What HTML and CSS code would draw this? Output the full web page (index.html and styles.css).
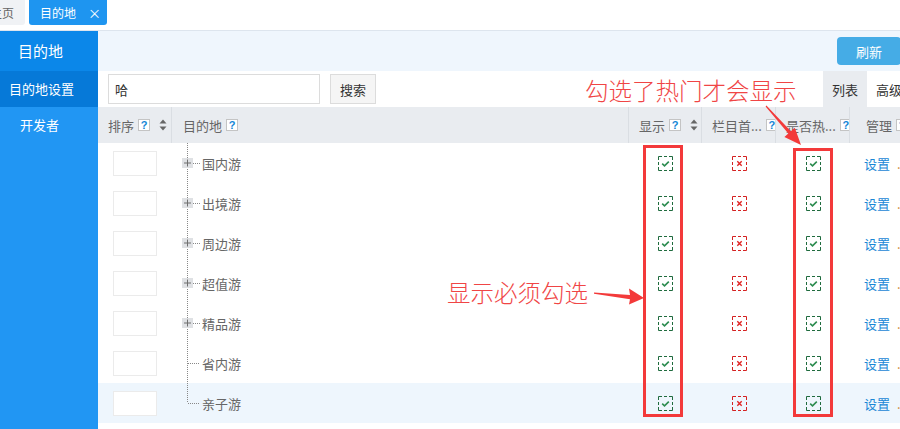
FILE: index.html
```html
<!DOCTYPE html>
<html lang="zh-CN">

<head>
    <meta charset="UTF-8" />
    <meta name="viewport" content="width=device-width, initial-scale=1.0" />
    <link rel="stylesheet" href="styles.css">
    <title>目的地设置</title>
</head>

<body>
    <svg width="0" height="0" class="sprite">
        <symbol id="ico-yes" viewBox="0 0 15 15">
            <path d="M.5 4V.5H4M11 .5h3.5V4M14.5 11v3.5H11M4 14.5H.5V11M6 .5h3M6 14.5h3M.5 6v3M14.5 6v3" fill="none" stroke="#1f6b3e" />
            <path d="M4.2 7.6l2.3 2.2 4.3-4.2" fill="none" stroke="#2d8c50" stroke-width="1.6" />
        </symbol>
        <symbol id="ico-no" viewBox="0 0 15 15">
            <path d="M.5 4V.5H4M11 .5h3.5V4M14.5 11v3.5H11M4 14.5H.5V11M6 .5h3M6 14.5h3M.5 6v3M14.5 6v3" fill="none" stroke="#d42222" />
            <path d="M5.3 5.3l4.4 4.4M9.7 5.3l-4.4 4.4" fill="none" stroke="#e02525" stroke-width="1.4" />
        </symbol>
        <symbol id="ico-sort" viewBox="0 0 8 12">
            <path d="M4 0.5L7.5 4.5H.5z M4 11.5L7.5 7.5H.5z" fill="#666" />
        </symbol>
        <symbol id="ico-plus" viewBox="0 0 11 10">
            <rect width="11" height="10" fill="#dfe1e4" />
            <path d="M2 5h7M5.5 1.5v7" stroke="#6f6f6f" stroke-width="1" />
        </symbol>
    </svg>

    <div class="topbar">
        <div class="tab">主页</div>
        <div class="tab active">目的地<span class="tab-close">×</span></div>
    </div>

    <div class="layout">
        <aside class="sidebar">
            <div class="side-title">目的地</div>
            <div class="side-item current">目的地设置</div>
            <div class="side-item">开发者</div>
        </aside>

        <main class="main">
            <div class="toolbar"><button class="btn-refresh">刷新</button></div>

            <div class="searchbar">
                <input class="search-input" type="text" value="哈">
                <button class="btn-search">搜索</button>
                <div class="view-tabs">
                    <span class="view-tab on">列表</span>
                    <span class="view-tab">高级</span>
                </div>
            </div>

            <table class="grid">
                <colgroup>
                    <col class="c-sort">
                    <col class="c-name">
                    <col class="c-show">
                    <col class="c-home">
                    <col class="c-hot">
                    <col class="c-op">
                </colgroup>
                <thead>
                    <tr>
                        <th>
                            <div class="th-in">排序<i class="q">?</i><svg class="sort"><use href="#ico-sort" /></svg></div>
                        </th>
                        <th class="th-name">
                            <div class="th-in">目的地<i class="q">?</i></div>
                        </th>
                        <th>
                            <div class="th-in">显示<i class="q">?</i><svg class="sort"><use href="#ico-sort" /></svg></div>
                        </th>
                        <th>
                            <div class="th-in">栏目首...<i class="q">?</i></div>
                        </th>
                        <th>
                            <div class="th-in">是否热...<i class="q">?</i></div>
                        </th>
                        <th class="th-op">
                            <div class="th-in">管理<i class="q">?</i></div>
                        </th>
                    </tr>
                </thead>
                <tbody>
                    <tr>
                        <td class="sort-cell"><span class="sort-box"></span></td>
                        <td class="name-cell"><div class="node-wrap"><span class="node"><svg class="plus"><use href="#ico-plus" /></svg></span><span class="node-text">国内游</span></div></td>
                        <td class="flag"><svg class="ico"><use href="#ico-yes" /></svg></td>
                        <td class="flag"><svg class="ico"><use href="#ico-no" /></svg></td>
                        <td class="flag"><svg class="ico"><use href="#ico-yes" /></svg></td>
                        <td class="op-cell"><a href="#">设置</a><span class="more">.</span></td>
                    </tr>
                    <tr>
                        <td class="sort-cell"><span class="sort-box"></span></td>
                        <td class="name-cell"><div class="node-wrap"><span class="node"><svg class="plus"><use href="#ico-plus" /></svg></span><span class="node-text">出境游</span></div></td>
                        <td class="flag"><svg class="ico"><use href="#ico-yes" /></svg></td>
                        <td class="flag"><svg class="ico"><use href="#ico-no" /></svg></td>
                        <td class="flag"><svg class="ico"><use href="#ico-yes" /></svg></td>
                        <td class="op-cell"><a href="#">设置</a><span class="more">.</span></td>
                    </tr>
                    <tr>
                        <td class="sort-cell"><span class="sort-box"></span></td>
                        <td class="name-cell"><div class="node-wrap"><span class="node"><svg class="plus"><use href="#ico-plus" /></svg></span><span class="node-text">周边游</span></div></td>
                        <td class="flag"><svg class="ico"><use href="#ico-yes" /></svg></td>
                        <td class="flag"><svg class="ico"><use href="#ico-no" /></svg></td>
                        <td class="flag"><svg class="ico"><use href="#ico-yes" /></svg></td>
                        <td class="op-cell"><a href="#">设置</a><span class="more">.</span></td>
                    </tr>
                    <tr>
                        <td class="sort-cell"><span class="sort-box"></span></td>
                        <td class="name-cell"><div class="node-wrap"><span class="node"><svg class="plus"><use href="#ico-plus" /></svg></span><span class="node-text">超值游</span></div></td>
                        <td class="flag"><svg class="ico"><use href="#ico-yes" /></svg></td>
                        <td class="flag"><svg class="ico"><use href="#ico-no" /></svg></td>
                        <td class="flag"><svg class="ico"><use href="#ico-yes" /></svg></td>
                        <td class="op-cell"><a href="#">设置</a><span class="more">.</span></td>
                    </tr>
                    <tr>
                        <td class="sort-cell"><span class="sort-box"></span></td>
                        <td class="name-cell"><div class="node-wrap"><span class="node"><svg class="plus"><use href="#ico-plus" /></svg></span><span class="node-text">精品游</span></div></td>
                        <td class="flag"><svg class="ico"><use href="#ico-yes" /></svg></td>
                        <td class="flag"><svg class="ico"><use href="#ico-no" /></svg></td>
                        <td class="flag"><svg class="ico"><use href="#ico-yes" /></svg></td>
                        <td class="op-cell"><a href="#">设置</a><span class="more">.</span></td>
                    </tr>
                    <tr>
                        <td class="sort-cell"><span class="sort-box"></span></td>
                        <td class="name-cell"><div class="node-wrap"><span class="node leaf"></span><span class="node-text">省内游</span></div></td>
                        <td class="flag"><svg class="ico"><use href="#ico-yes" /></svg></td>
                        <td class="flag"><svg class="ico"><use href="#ico-no" /></svg></td>
                        <td class="flag"><svg class="ico"><use href="#ico-yes" /></svg></td>
                        <td class="op-cell"><a href="#">设置</a><span class="more">.</span></td>
                    </tr>
                    <tr class="hover">
                        <td class="sort-cell"><span class="sort-box"></span></td>
                        <td class="name-cell"><div class="node-wrap"><span class="node leaf last"></span><span class="node-text">亲子游</span></div></td>
                        <td class="flag"><svg class="ico"><use href="#ico-yes" /></svg></td>
                        <td class="flag"><svg class="ico"><use href="#ico-no" /></svg></td>
                        <td class="flag"><svg class="ico"><use href="#ico-yes" /></svg></td>
                        <td class="op-cell"><a href="#">设置</a><span class="more">.</span></td>
                    </tr>
                </tbody>
            </table>
        </main>
    </div>

    <!-- annotations drawn over the screenshot -->
    <div class="note note-hot">勾选了热门才会显示</div>
    <div class="note note-show">显示必须勾选</div>
    <div class="mark mark-show"></div>
    <div class="mark mark-hot"></div>
    <svg class="arrows" width="900" height="429" viewBox="0 0 900 429">
        <polygon points="765.6,106.4 788.3,133.5 784.4,137.1 801,145 794.8,127.7 790.9,131.3 766.4,105.6" fill="#f33a3a" />
        <polygon points="594,292.5 630,295 629,288.5 644,298 629,304.5 630,299.2 594,293.8" fill="#f33a3a" />
    </svg>
</body>

</html>
```

FILE: styles.css
```css
* {
    margin: 0;
    padding: 0;
    box-sizing: border-box;
}

body {
    position: relative;
    width: 900px;
    height: 429px;
    overflow: hidden;
    background-color: #fff;
    color: #666;
    font-family: "Noto Sans CJK SC", "Noto Sans", sans-serif;
    font-size: 13px;
}

.sprite {
    display: block;
}

/* top tabs */
.topbar {
    display: flex;
    gap: 4px;
    height: 31px;
    margin-left: -21px;
    border-bottom: 1px solid #dde5ee;
}

.tab {
    height: 25px;
    padding: 0 11px;
    border-radius: 0 0 3px 3px;
    background-color: #f0f2f5;
    color: #666;
    font-size: 12px;
    line-height: 25px;
}

.tab.active {
    padding-right: 6px;
    background-color: #1e95f0;
    color: #fff;
}

.tab-close {
    margin-left: 12px;
    font-size: 13px;
}

/* layout */
.layout {
    display: flex;
    height: 398px;
}

.sidebar {
    flex: none;
    width: 98px;
    background-color: #2196f3;
    color: #fff;
}

.side-title {
    height: 40px;
    padding-left: 18px;
    background-color: #0b87e9;
    font-size: 15px;
    line-height: 40px;
}

.side-item {
    height: 36px;
    padding-left: 20px;
    line-height: 36px;
}

.side-item.current {
    padding-left: 9px;
    background-color: #0679d8;
}

.main {
    flex: 1;
    min-width: 0;
    overflow: hidden;
}

.toolbar {
    display: flex;
    justify-content: flex-end;
    width: 803px;
    height: 40px;
    padding-top: 6px;
    background-color: #eff6fd;
}

.btn-refresh {
    width: 64px;
    height: 28px;
    border: 0;
    border-radius: 4px;
    background-color: #45ace6;
    color: #fff;
    font-family: inherit;
    font-size: 13px;
}

.searchbar {
    display: flex;
    align-items: center;
    width: 813px;
    height: 36px;
    padding-left: 10px;
}

.search-input {
    width: 212px;
    height: 30px;
    padding: 0 6px;
    border: 1px solid #dcdcdc;
    color: #333;
    font-family: inherit;
    font-size: 13px;
    outline: none;
}

.btn-search {
    width: 46px;
    height: 30px;
    margin-left: 10px;
    border: 1px solid #dcdcdc;
    background-color: #f5f5f5;
    color: #333;
    font-family: inherit;
    font-size: 13px;
}

.view-tabs {
    display: flex;
    align-self: stretch;
    margin-left: auto;
}

.view-tab {
    display: flex;
    align-items: center;
    justify-content: center;
    width: 44px;
    color: #333;
}

.view-tab.on {
    background-color: #e9ecf0;
}

/* table */
.grid {
    width: 851px;
    table-layout: fixed;
    border-collapse: separate;
    border-spacing: 0;
}

.c-sort { width: 74px; }
.c-name { width: 457px; }
.c-show { width: 73px; }
.c-home { width: 74px; }
.c-hot { width: 74px; }
.c-op { width: 99px; }

.grid th {
    height: 36px;
    padding-left: 10px;
    border-right: 1px solid #dadee3;
    background-color: #e9ecf0;
    color: #666;
    font-weight: normal;
    text-align: left;
    white-space: nowrap;
    overflow: hidden;
}

.grid th.th-name {
    padding-left: 11px;
}

.grid th.th-op {
    padding-left: 16px;
    border-right: 0;
}

.th-in {
    display: flex;
    align-items: center;
}

.q {
    flex: none;
    width: 12px;
    height: 12px;
    margin-left: 4px;
    border: 1px solid #c4c4c4;
    background-color: #fff;
    color: #1486d6;
    font: bold 11px/10px "Liberation Sans", sans-serif;
    font-style: normal;
    text-align: center;
}

.sort {
    flex: none;
    width: 8px;
    height: 12px;
    margin-left: 9px;
}

.grid td {
    height: 40px;
    padding: 0;
}

.grid tr.hover td {
    background-color: #eef6fd;
}

.sort-cell {
    padding-left: 15px !important;
}

.sort-box {
    display: block;
    width: 44px;
    height: 25px;
    border: 1px solid #ebebeb;
    background-color: #fff;
}

.name-cell {
    padding-left: 10px !important;
}

.node-wrap {
    display: flex;
    align-items: center;
    height: 40px;
}

.node {
    display: flex;
    align-items: center;
    flex: none;
    width: 18px;
    height: 40px;
    background:
        repeating-linear-gradient(to right, #888 0 1px, transparent 1px 2px) 11px 50% / 7px 1px no-repeat,
        repeating-linear-gradient(to bottom, #888 0 1px, transparent 1px 2px) 5px 0 / 1px 100% no-repeat;
}

.node.leaf {
    background:
        repeating-linear-gradient(to right, #888 0 1px, transparent 1px 2px) 6px 50% / 12px 1px no-repeat,
        repeating-linear-gradient(to bottom, #888 0 1px, transparent 1px 2px) 5px 0 / 1px 100% no-repeat;
}

.node.leaf.last {
    background:
        repeating-linear-gradient(to right, #888 0 1px, transparent 1px 2px) 6px 50% / 12px 1px no-repeat,
        repeating-linear-gradient(to bottom, #888 0 1px, transparent 1px 2px) 5px 0 / 1px 50% no-repeat;
}

.plus {
    width: 11px;
    height: 10px;
}

.node-text {
    margin-left: 2px;
    color: #666;
}

.flag {
    text-align: center;
}

.ico {
    display: inline-block;
    width: 15px;
    height: 15px;
    margin-top: -2px;
    vertical-align: middle;
}

.op-cell {
    padding-left: 14px !important;
    white-space: nowrap;
}

.op-cell a {
    color: #1a87d6;
    text-decoration: none;
}

.more {
    margin-left: 7px;
    color: #d08a30;
}

/* red notes over the page */
.note {
    position: absolute;
    color: #f04545;
    font-size: 23.5px;
    font-weight: 300;
    line-height: 24px;
    white-space: nowrap;
}

.note-hot {
    left: 585px;
    top: 78px;
}

.note-show {
    left: 447px;
    top: 280px;
}

.mark {
    position: absolute;
    border: 3px solid #f3393a;
}

.mark-show {
    left: 643px;
    top: 145px;
    width: 40px;
    height: 272px;
}

.mark-hot {
    left: 793px;
    top: 148px;
    width: 40px;
    height: 269px;
}

.arrows {
    position: absolute;
    left: 0;
    top: 0;
    pointer-events: none;
}
```
